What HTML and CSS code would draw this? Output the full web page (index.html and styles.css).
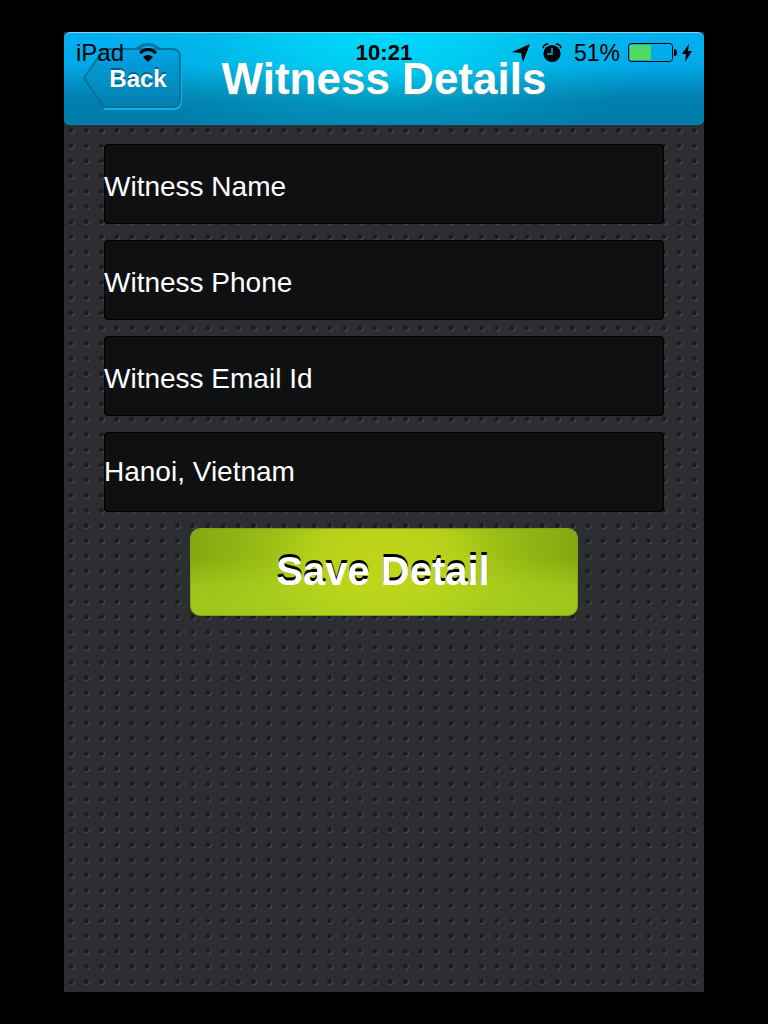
FILE: index.html
```html
<!DOCTYPE html>
<html lang="en">
<head>
<meta charset="utf-8">
<meta name="viewport" content="width=device-width, initial-scale=1">
<title>Witness Details</title>
<link rel="stylesheet" href="styles.css">
</head>
<body>
<div class="screen">
  <header class="navbar">
    <button class="back" type="button">
      <svg class="back-shape" viewBox="0 0 100 64" aria-hidden="true">
        <defs>
          <linearGradient id="backFill" x1="0" y1="0" x2="0" y2="1">
            <stop offset="0" stop-color="#00a6e8"/>
            <stop offset="0.45" stop-color="#0393cb"/>
            <stop offset="1" stop-color="#0480b0"/>
          </linearGradient>
        </defs>
        <path d="M22 62H91Q99 62 99 54V12" fill="none" stroke="#0cb4f5" stroke-width="2"/>
        <path d="M22 2H90Q98 2 98 10V52Q98 60 90 60H22L2 31Z" fill="url(#backFill)" stroke="#04709c" stroke-width="2"/>
      </svg>
      <span class="back-label">Back</span>
    </button>
    <h1 class="title">Witness Details</h1>
    <div class="status">
      <div class="status-side">
        <span class="carrier">iPad</span>
        <svg class="wifi" viewBox="0 0 24 20" aria-hidden="true">
          <path d="M1 6Q12 -3 23 6" fill="none" stroke="#0670a0" stroke-width="3"/>
          <path d="M4 10Q12 3 20 10" fill="none" stroke="#000" stroke-width="3"/>
          <path d="M12 19L7 14Q12 10 17 14Z"/>
        </svg>
      </div>
      <span class="clock">10:21</span>
      <div class="status-side status-right">
        <svg class="arrow" viewBox="0 0 18 18" aria-hidden="true"><path d="M18 0L11 18L9 9L0 8Z"/></svg>
        <svg class="alarm" viewBox="0 0 20 20" aria-hidden="true">
          <circle cx="10" cy="10.500" r="8.600"/>
          <path d="M1 5Q2 1 6 1M19 5Q18 1 14 1" fill="none" stroke="#000" stroke-width="1.500"/>
          <path d="M10 5V11H5" fill="none" stroke="#05b5ee" stroke-width="1.500"/>
        </svg>
        <span class="percent">51%</span>
        <svg class="battery" viewBox="0 0 50 20" aria-hidden="true">
          <rect x="0.500" y="0.500" width="44" height="18" rx="3" fill="none" stroke="#000"/>
          <rect x="2" y="2" width="21" height="15" fill="#4cd964"/>
          <path d="M46 6Q49 6 49 9.500T46 13Z"/>
        </svg>
        <svg class="bolt" viewBox="0 0 10 18" aria-hidden="true"><path d="M7 0L0 10H4L3 18L10 7H6Z"/></svg>
      </div>
    </div>
  </header>
  <form class="form">
    <input class="field" type="text" aria-label="Witness Name" placeholder="Witness Name">
    <input class="field" type="tel" aria-label="Witness Phone" placeholder="Witness Phone">
    <input class="field" type="email" aria-label="Witness Email Id" placeholder="Witness Email Id">
    <input class="field field-filled" type="text" aria-label="Location" value="Hanoi, Vietnam">
    <button class="save" type="button">Save Detail</button>
  </form>
</div>
</body>
</html>
```
FILE: styles.css
```css
* {
  box-sizing: border-box;
}

body {
  margin: 0;
  min-height: 100vh;
  padding: 32px 64px;
  display: flex;
  background: #000;
  font-family: "Liberation Sans", Arial, Helvetica, sans-serif;
}

/* Embossed dots on a 76px tile, five per side */
.screen {
  flex: 1;
  min-width: 0;
  background-color: #2d2e31;
  background-image: url("data:image/svg+xml,%3Csvg xmlns='http://www.w3.org/2000/svg' width='76' height='76' viewBox='0 0 75 75'%3E%3Cdefs%3E%3Cpattern id='d' width='15' height='15' patternUnits='userSpaceOnUse'%3E%3Ccircle cx='8' cy='8' r='2.400' fill='%234c4d51'/%3E%3Ccircle cx='7' cy='7' r='2.400' fill='%231b1c1e'/%3E%3C/pattern%3E%3C/defs%3E%3Crect width='75' height='75' fill='url(%23d)'/%3E%3C/svg%3E");
  background-size: 76px 76px;
  background-position: 0 0;
}

.navbar {
  position: relative;
  padding: 14px 18px;
  display: grid;
  grid-template-columns: 1fr auto 1fr;
  align-items: center;
  border-top: 1px solid #7fd8f8;
  border-radius: 6px;
  background:
    linear-gradient(rgba(0, 127, 170, 0) 40%, rgba(0, 127, 170, 0.45) 100%),
    radial-gradient(ellipse 44% 130% at 50% 0%, rgba(0, 218, 252, 0.95) 0%, rgba(0, 214, 244, 0.8) 30%, rgba(0, 200, 225, 0.35) 65%, rgba(0, 200, 225, 0) 100%),
    linear-gradient(#02b0f2 0%, #02a9ea 35%, #027fb0 72%, #017cac 100%);
  box-shadow: inset 0 -1px 0 #0287b8;
}

.back {
  position: relative;
  width: 100px;
  height: 64px;
  padding: 0 0 0 12px;
  border: 0;
  background: none;
  color: #fff;
  font: bold 24px/28px "Liberation Sans", Arial, sans-serif;
  text-shadow: 0 -2px 0 #045f86;
}

.back-shape {
  position: absolute;
  inset: 0;
  width: 100%;
  height: 100%;
}

.back-label {
  position: relative;
}

.title {
  margin: 0;
  color: #fff;
  font-size: 44px;
  line-height: 64px;
  white-space: nowrap;
  text-shadow: 0 1px 1px #5a8f9d;
}

/* System status line, drawn over the bar */
.status {
  position: absolute;
  inset: 8px 12px auto;
  display: grid;
  grid-template-columns: 1fr auto 1fr;
  align-items: center;
  color: #000;
  font-size: 24px;
  line-height: 24px;
  pointer-events: none;
}

.status-side {
  display: flex;
  align-items: center;
  gap: 12px;
}

.status-right {
  justify-content: flex-end;
}

.clock {
  font-size: 22px;
  font-weight: bold;
}

.percent {
  font-size: 23px;
}

.wifi {
  width: 24px;
  height: 20px;
}

.arrow {
  width: 18px;
  height: 18px;
}

.alarm {
  width: 20px;
  height: 20px;
}

.battery {
  width: 50px;
  height: 20px;
  margin-left: -4px;
}

.bolt {
  width: 10px;
  height: 18px;
  margin-left: -8px;
}

.form {
  padding: 19px 40px;
  display: flex;
  flex-direction: column;
  gap: 16px;
}

.field {
  width: 100%;
  height: 80px;
  padding: 6px 0 0;
  border: 1px solid #020203;
  border-left-width: 0;
  border-radius: 4px;
  background: #0f1012;
  box-shadow: inset 1px 0 0 #020203;
  color: #fff;
  font-family: inherit;
  font-size: 28px;
  outline: none;
}

.field::placeholder {
  color: #fff;
  opacity: 1;
}

.field-filled {
  padding-top: 0;
}

.save {
  align-self: center;
  width: 388px;
  max-width: 100%;
  height: 88px;
  padding: 0 2px 2px 0;
  border: 1px solid #83a41a;
  border-radius: 10px;
  background:
    radial-gradient(ellipse 50% 130% at 50% 35%, rgba(196, 216, 26, 0.95) 0%, rgba(192, 216, 28, 0.85) 35%, rgba(186, 214, 32, 0.4) 65%, rgba(180, 205, 20, 0) 100%),
    linear-gradient(#85aa12 0%, #81a80f 32%, #9cc41a 68%, #9fc81b 100%);
  color: #fff;
  font: bold 40px/48px "Liberation Sans", Arial, sans-serif;
  text-shadow: 0 -3px 0 #000;
}
```
